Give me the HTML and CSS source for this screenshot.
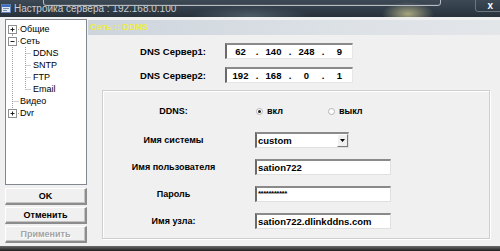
FILE: index.html
```html
<!DOCTYPE html>
<html lang="ru">
<head>
<meta charset="utf-8">
<title>Настройка сервера</title>
<link rel="stylesheet" href="styles.css">
</head>
<body>
<div class="titlebar">
  <svg class="app-icon" width="10" height="9" viewBox="0 0 10 9">
    <rect x="0.5" y="0.5" width="9" height="8" fill="#dfe8f4" stroke="#5b7fb0"/>
    <rect x="1" y="1" width="8" height="2" fill="#3d6cc0"/>
    <rect x="2" y="4" width="6" height="1" fill="#7a8fa8"/>
    <rect x="2" y="6" width="4" height="1" fill="#7a8fa8"/>
  </svg>
  <span class="title">Настройка сервера : 192.168.0.100</span>
  <span class="close">x</span>
</div>
<div class="window">
  <aside class="sidebar">
    <div class="tree">
      <div class="node">
        <svg class="conn top" width="14" height="12" viewBox="0 0 14 12"><path class="dot" d="M6.5 7V12M10 6.5H14"/><rect class="box" x="2.5" y="2.5" width="8" height="8"/><path class="sign" d="M4.5 6.5H8.5M6.5 4.5V8.5"/></svg>
        <span>Общие</span>
      </div>
      <div class="node">
        <svg class="conn top" width="14" height="12" viewBox="0 0 14 12"><path class="dot" d="M6.5 0V12M10 6.5H14"/><rect class="box" x="2.5" y="2.5" width="8" height="8"/><path class="sign" d="M4.5 6.5H8.5"/></svg>
        <span>Сеть</span>
      </div>
      <div class="node">
        <svg class="conn child" width="27" height="12" viewBox="0 0 27 12"><path class="dot" d="M6.5 0V12M19.5 0V12M19.5 6.5H25"/></svg>
        <span>DDNS</span>
      </div>
      <div class="node">
        <svg class="conn child" width="27" height="12" viewBox="0 0 27 12"><path class="dot" d="M6.5 0V12M19.5 0V12M19.5 6.5H25"/></svg>
        <span>SNTP</span>
      </div>
      <div class="node">
        <svg class="conn child" width="27" height="12" viewBox="0 0 27 12"><path class="dot" d="M6.5 0V12M19.5 0V12M19.5 6.5H25"/></svg>
        <span>FTP</span>
      </div>
      <div class="node">
        <svg class="conn child" width="27" height="12" viewBox="0 0 27 12"><path class="dot" d="M6.5 0V12M19.5 0V6.5M19.5 6.5H25"/></svg>
        <span>Email</span>
      </div>
      <div class="node">
        <svg class="conn top" width="14" height="12" viewBox="0 0 14 12"><path class="dot" d="M6.5 0V12M6.5 6.5H13"/></svg>
        <span>Видео</span>
      </div>
      <div class="node">
        <svg class="conn top" width="14" height="12" viewBox="0 0 14 12"><path class="dot" d="M6.5 0V3M10 6.5H14"/><rect class="box" x="2.5" y="2.5" width="8" height="8"/><path class="sign" d="M4.5 6.5H8.5M6.5 4.5V8.5"/></svg>
        <span>Dvr</span>
      </div>
    </div>
    <div class="buttons">
      <button class="btn">OK</button>
      <button class="btn">Отменить</button>
      <button class="btn disabled">Применить</button>
    </div>
  </aside>
  <main class="content">
    <div class="band">Сеть :: DDNS</div>
    <div class="dns">
      <div class="dns-row">
        <span class="dns-label">DNS Сервер1:</span>
        <div class="ip"><span class="oct">62</span><span class="sep">.</span><span class="oct">140</span><span class="sep">.</span><span class="oct">248</span><span class="sep">.</span><span class="oct">9</span></div>
      </div>
      <div class="dns-row">
        <span class="dns-label">DNS Сервер2:</span>
        <div class="ip"><span class="oct">192</span><span class="sep">.</span><span class="oct">168</span><span class="sep">.</span><span class="oct">0</span><span class="sep">.</span><span class="oct">1</span></div>
      </div>
    </div>
    <div class="group">
      <div class="row ddns-row">
        <span class="label">DDNS:</span>
        <div class="radios">
          <span class="radio on"><i class="circle"></i>вкл</span>
          <span class="radio"><i class="circle"></i>выкл</span>
        </div>
      </div>
      <div class="row">
        <span class="label">Имя системы</span>
        <div class="select field"><span class="val">custom</span><span class="drop"><svg width="5" height="3" viewBox="0 0 5 3"><path d="M0 0H5L2.5 3Z" fill="#000"/></svg></span></div>
      </div>
      <div class="row">
        <span class="label">Имя пользователя</span>
        <div class="input field">sation722</div>
      </div>
      <div class="row">
        <span class="label">Пароль</span>
        <div class="input field pass">***********</div>
      </div>
      <div class="row">
        <span class="label">Имя узла:</span>
        <div class="input field">sation722.dlinkddns.com</div>
      </div>
    </div>
  </main>
</div>
<div class="taskbar"></div>
</body>
</html>
```

FILE: styles.css
```css
* { box-sizing: border-box; }
html, body { margin: 0; padding: 0; }
body {
  width: 500px;
  height: 251px;
  overflow: hidden;
  background: #f0f0f0;
  font-family: "Liberation Sans", Arial, sans-serif;
  font-size: 9px;
  color: #000;
}

/* title bar */
.titlebar {
  position: relative;
  height: 17px;
  display: flex;
  align-items: center;
  background:
    radial-gradient(ellipse 26px 12px at 408px 14px, rgba(210,205,150,.75), rgba(210,205,150,0)),
    radial-gradient(ellipse 60px 10px at 250px 16px, rgba(110,130,140,.5), rgba(110,130,140,0)),
    linear-gradient(#3d4a56, #26313b);
}
.titlebar::before {
  content: "";
  position: absolute;
  left: 43px;
  top: -6px;
  width: 396px;
  height: 10px;
  border: 1px solid #b6bcc2;
  border-radius: 0 0 3px 3px;
  box-shadow: inset 0 -1px 0 #4a555e;
}
.titlebar::after {
  content: "";
  position: absolute;
  left: 475px;
  top: -4px;
  width: 30px;
  height: 14px;
  border: 1px solid #6c7780;
  border-radius: 0 0 3px 3px;
}
.app-icon { margin-left: 1px; flex: none; }
.title {
  margin-left: 3px;
  color: #c9cdd1;
  font-size: 10px;
  line-height: 12px;
  white-space: nowrap;
}
.close {
  margin-left: auto;
  margin-right: 7px;
  align-self: flex-start;
  margin-top: 1px;
  color: #fff;
  font-weight: bold;
  font-size: 10px;
  line-height: 9px;
}

/* window */
.window {
  display: flex;
  height: 229px;
}
.sidebar {
  width: 82px;
  margin-left: 5px;
  padding-top: 2px;
  flex: none;
}
.tree {
  height: 166px;
  background: #fff;
  border: 1px solid #828790;
  padding-top: 3px;
}
.node {
  display: flex;
  align-items: center;
  height: 12px;
  white-space: nowrap;
}
.node span { line-height: 12px; }
.conn { flex: none; display: block; }
.dot { stroke: #a0a0a0; stroke-width: 1; stroke-dasharray: 1 1; fill: none; }
.box { fill: #fff; stroke: #8e8f8f; stroke-width: 1; }
.sign { stroke: #202020; stroke-width: 1; fill: none; }

.buttons {
  margin-top: 3px;
  display: flex;
  flex-direction: column;
  gap: 2px;
}
.btn {
  height: 17px;
  margin: 0;
  padding: 0;
  font-family: "Liberation Sans", Arial, sans-serif;
  font-size: 9px;
  font-weight: bold;
  color: #000;
  background: #f0f0f0;
  border-style: solid;
  border-width: 1px 2px 2px 1px;
  border-color: #fff #8c8c8c #8c8c8c #fff;
  box-shadow: inset -1px -1px 0 #c4c4c4;
}
.btn.disabled {
  color: #a4a4a4;
  text-shadow: 1px 1px 0 #fff;
}

/* content */
.content {
  flex: 1;
  padding-top: 3px;
}
.band {
  margin-left: 1px;
  height: 15px;
  padding-left: 2px;
  line-height: 15px;
  font-weight: bold;
  color: #eeee3e;
  background: linear-gradient(to right, #cdd4dc, #dce1e6 60%, #e3e6e9);
}
.dns {
  margin-top: 8px;
  display: flex;
  flex-direction: column;
  gap: 8px;
}
.dns-row {
  display: flex;
  align-items: center;
  height: 16px;
}
.dns-label {
  width: 119px;
  text-align: right;
  font-weight: bold;
  font-size: 9.5px;
}
.ip {
  margin-left: 19px;
  width: 128px;
  height: 16px;
  display: flex;
  align-items: center;
  background: #fff;
  border-style: solid;
  border-width: 2px 1px 1px 2px;
  border-color: #8a8a8a #e6e6e6 #e6e6e6 #6a6a6a;
  font-weight: bold;
  font-size: 9.5px;
  padding-left: 1px;
}
.oct { width: 25px; text-align: center; }
.sep { width: 8px; text-align: center; }

.group {
  margin: 7px 0 0 15px;
  width: 388px;
  height: 149px;
  border: 1px solid #cfcfcf;
  box-shadow: inset 1px 1px 0 #fff, 1px 1px 0 #fff;
  padding-top: 12px;
  display: flex;
  flex-direction: column;
  gap: 11px;
}
.row {
  display: flex;
  align-items: center;
  height: 16px;
}
.ddns-row { margin-bottom: 2px; }
.label {
  width: 141px;
  text-align: center;
  font-weight: bold;
  white-space: nowrap;
}
.radios {
  margin-left: 12px;
  display: flex;
}
.radio {
  display: flex;
  align-items: center;
  font-weight: bold;
  width: 72px;
}
.circle {
  width: 7px;
  height: 7px;
  border-radius: 50%;
  border: 1px solid #b4b4b4;
  background: #fff;
  margin-right: 4px;
  display: flex;
  align-items: center;
  justify-content: center;
}
.radio.on .circle::after {
  content: "";
  width: 3px;
  height: 3px;
  border-radius: 50%;
  background: #222;
}
.field {
  margin-left: 11px;
  height: 16px;
  background: #fff;
  border-style: solid;
  border-width: 2px 1px 1px 2px;
  border-color: #8a8a8a #e0e0e0 #e0e0e0 #6a6a6a;
  font-weight: bold;
  font-size: 9.5px;
  line-height: 13px;
  padding-left: 1px;
  white-space: nowrap;
}
.input { width: 136px; }
.pass { font-size: 8px; letter-spacing: -0.5px; line-height: 12px; }
.select {
  width: 94px;
  display: flex;
  align-items: stretch;
}
.select .val { flex: 1; }
.drop {
  width: 11px;
  background: #f0f0f0;
  border-style: solid;
  border-width: 1px;
  border-color: #fff #7a7a7a #7a7a7a #fff;
  display: flex;
  align-items: center;
  justify-content: center;
}
.taskbar {
  height: 5px;
  background: linear-gradient(#6a6a6a, #1e1e1e);
}
```
